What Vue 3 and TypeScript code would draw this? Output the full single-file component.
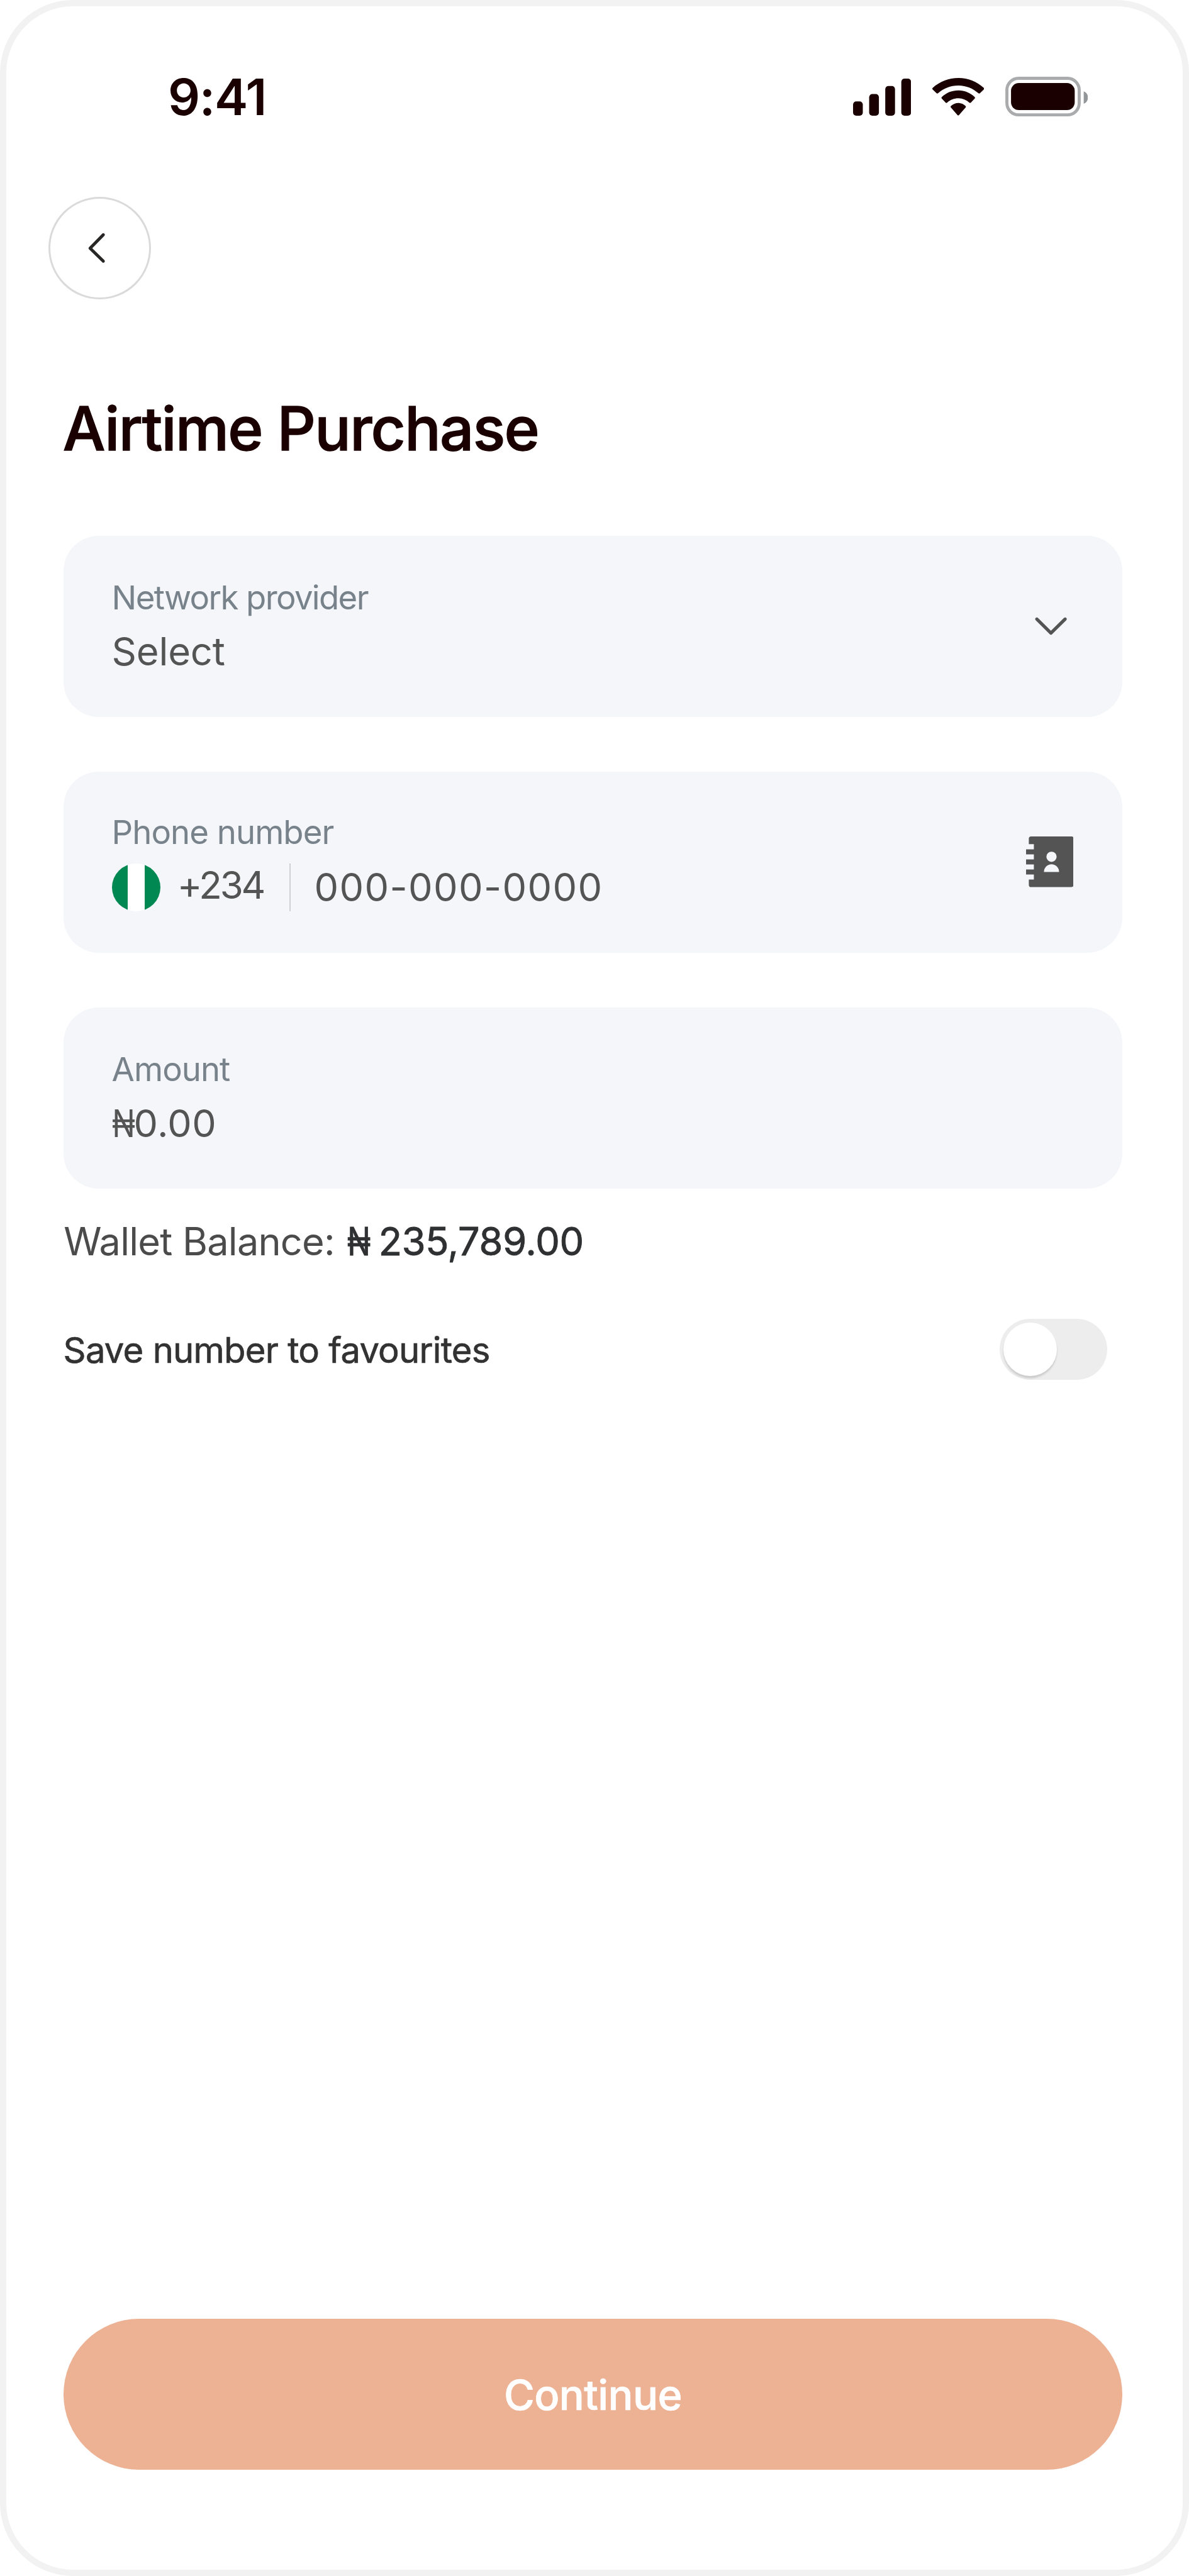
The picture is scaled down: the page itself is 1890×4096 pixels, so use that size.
<script setup lang="ts">
import { ref } from 'vue'

const provider = ref('Select')
const favourite = ref(false)
</script>

<template>
  <main class="screen">
    <header class="status">
      <span class="time">9:41</span>
      <div class="indicators">
        <svg class="signal" viewBox="0 0 109.5 70" aria-hidden="true">
          <rect x="0" y="43" width="18.4" height="27" rx="6" />
          <rect x="30.4" y="29" width="18.4" height="41" rx="6" />
          <rect x="60.8" y="14" width="18.4" height="56" rx="6" />
          <rect x="91.1" y="0" width="18.4" height="70" rx="6" />
        </svg>
        <svg class="wifi" viewBox="0 0 17.142 12.33" preserveAspectRatio="none" aria-hidden="true">
          <path d="M8.5713 2.46628C11.0584 2.46639 13.4504 3.38847 15.2529 5.04195C15.3887 5.16963 15.6056 5.16802 15.7393 5.03834L17.0368 3.77487C17.1045 3.70911 17.1422 3.62004 17.1417 3.52735C17.1411 3.43467 17.1023 3.34603 17.0338 3.28104C12.3028 -1.09368 4.83907 -1.09368 0.108056 3.28104C0.03995 3.34598 0.00064 3.4346 0 3.52728C-0.00062 3.61996 0.03705 3.70906 0.10469 3.77487L1.40255 5.03834C1.53615 5.16822 1.75327 5.16983 1.88893 5.04195C3.69167 3.38836 6.08395 2.46628 8.5713 2.46628Z" />
          <path d="M8.56795 6.68656C9.92527 6.68647 11.2341 7.19821 12.2403 8.12234C12.3763 8.25347 12.5907 8.25063 12.7234 8.11594L14.0106 6.79647C14.0784 6.72724 14.116 6.63331 14.115 6.53577C14.114 6.43824 14.0746 6.34521 14.0054 6.27747C10.9416 3.38672 6.19688 3.38672 3.13305 6.27747C3.06384 6.34521 3.02435 6.43829 3.02345 6.53585C3.02254 6.6334 3.06028 6.72722 3.12822 6.79647L4.41513 8.11594C4.54778 8.25063 4.76215 8.25347 4.89823 8.12234C5.90368 7.19882 7.21151 6.68713 8.56795 6.68656Z" />
          <path d="M11.0924 9.48011C11.0943 9.58546 11.0572 9.68703 10.9899 9.76084L8.81327 12.2156C8.74946 12.2877 8.66247 12.3283 8.5717 12.3283C8.48093 12.3283 8.39394 12.2877 8.33014 12.2156L6.15311 9.76084C6.08581 9.68697 6.04892 9.58538 6.05106 9.48003C6.0532 9.37468 6.09422 9.27497 6.16438 9.20444C7.55436 7.89056 9.58905 7.89056 10.979 9.20444C11.0492 9.27502 11.0902 9.37476 11.0924 9.48011Z" />
        </svg>
        <svg class="battery" viewBox="0 0 156 75" aria-hidden="true">
          <rect x="3" y="3" width="136.5" height="69" rx="22" fill="none" stroke="#a9abad" stroke-width="5.8" />
          <rect x="10.8" y="12" width="120.2" height="51" rx="14.5" />
          <path d="M148 27.5a12.6 12.6 0 0 1 0 23.4z" fill="#939699" />
        </svg>
      </div>
    </header>

    <button class="back" type="button" aria-label="Back">
      <svg viewBox="0 0 34 60" aria-hidden="true">
        <path d="M30 5L5 30.5L30 55" />
      </svg>
    </button>

    <section class="content">
      <h1 class="title">Airtime Purchase</h1>

      <div class="fields">
        <div class="card">
          <div class="field">
            <span class="label network">Network provider</span>
            <span class="value">{{ provider }}</span>
          </div>
          <svg class="chevron" viewBox="0 0 66 44" aria-hidden="true">
            <path d="M6 8.8L32.7 35.2L59.5 8.8" />
          </svg>
        </div>

        <div class="card phone">
          <div class="field">
            <span class="label">Phone number</span>
            <div class="phone-row">
              <span class="flag" />
              <span class="code">+234</span>
              <span class="divider" />
              <span class="number">000-000-0000</span>
            </div>
          </div>
          <svg class="contacts" viewBox="0 0 18.9 20.1" aria-hidden="true">
            <path fill-rule="evenodd" d="M2 0H18A.9.9 0 0 1 18.9.9V19.2A.9.9 0 0 1 18 20.1H2A.9.9 0 0 1 1.1 19.2V17.1H3.1V15.1H0V13.1H3.1V11.1H0V9.1H3.1V7.1H0V5.1H3.1V3.05H1.1V.9A.9.9 0 0 1 2 0ZM7.1 14.1H13.1A3 3.05 0 0 0 7.1 14.1ZM10.1 10.1A2.03 2.03 0 1 0 10.1 6.04A2.03 2.03 0 0 0 10.1 10.1Z" />
          </svg>
        </div>

        <div class="card">
          <div class="field">
            <span class="label">Amount</span>
            <span class="value amount"><span class="naira">₦</span>0.00</span>
          </div>
        </div>
      </div>

      <p class="wallet"><span class="wallet-label">Wallet Balance:</span><span class="balance"><span class="naira">₦ </span>235,789.00</span></p>

      <div class="save">
        <span class="save-label">Save number to favourites</span>
        <button class="toggle" :class="{ on: favourite }" type="button" role="switch" :aria-checked="favourite" aria-label="Save number to favourites" @click="favourite = !favourite">
          <span class="knob" />
        </button>
      </div>

      <button class="continue" type="button">Continue</button>
    </section>
  </main>
</template>

<style>
body {
  background: #fff;
}
</style>

<style scoped>
.screen {
  box-sizing: border-box;
  width: 1890px;
  height: 4096px;
  padding-top: 104px;
  border: 10px solid #f2f2f2;
  border-radius: 116px;
  background: #fff;
  color: #1a0000;
  font-family: Inter, "Liberation Sans", sans-serif;
  display: flex;
  flex-direction: column;
  overflow: hidden;
}

button {
  font: inherit;
  border: 0;
  padding: 0;
  margin: 0;
}

.status {
  display: flex;
  align-items: center;
  justify-content: space-between;
  height: 80px;
  padding: 0 151px 0 257px;
}

.time {
  font-size: 80px;
  line-height: 80px;
  font-weight: 600;
  letter-spacing: -1.3px;
}

.indicators {
  display: flex;
  align-items: center;
  fill: #1a0000;
}

.signal {
  width: 92.2px;
  height: 59px;
}

.wifi {
  width: 82.4px;
  height: 59.5px;
  margin-left: 33.4px;
}

.battery {
  width: 131.4px;
  height: 63.2px;
  margin-left: 33.6px;
}

.back {
  box-sizing: border-box;
  width: 163px;
  height: 163px;
  margin: 118.5px 0 0 67.2px;
  border: 3px solid #dadada;
  border-radius: 50%;
  background: #fff;
  display: flex;
  align-items: center;
  justify-content: center;
  flex: none;
}

.back svg {
  width: 28.6px;
  height: 50.5px;
  margin-right: 10.2px;
}

.back path {
  fill: none;
  stroke: #292626;
  stroke-width: 5.8;
  stroke-linecap: round;
  stroke-linejoin: round;
}

.content {
  flex: 1;
  display: flex;
  flex-direction: column;
  padding: 145.5px 96.2px 159px 91.2px;
}

.title {
  margin: 0 0 111px -1.4px;
  font-size: 95.7px;
  line-height: 120px;
  font-weight: 500;
  letter-spacing: -1.7px;
  -webkit-text-stroke: 1.3px currentColor;
}

.fields {
  display: flex;
  flex-direction: column;
  gap: 86.8px;
}

.card {
  box-sizing: border-box;
  height: 288px;
  padding: 66.2px 85.5px 0 76.4px;
  border-radius: 56px;
  background: #f4f6fa;
  display: flex;
  justify-content: space-between;
}

.card.phone {
  padding-top: 64.4px;
  padding-right: 77.5px;
}

.field {
  display: flex;
  flex-direction: column;
}

.label {
  font-size: 52.7px;
  line-height: 64px;
  letter-spacing: -0.97px;
  color: #78828a;
}

.label.network {
  letter-spacing: -1.64px;
}

.value {
  margin-top: 15.8px;
  font-size: 61.5px;
  line-height: 76px;
  letter-spacing: -0.2px;
  color: #545454;
}

.naira {
  display: inline-block;
  transform: scaleX(0.79);
  transform-origin: left;
}

.value.amount {
  font-size: 61px;
  letter-spacing: 0.4px;
}

.amount .naira {
  width: 35px;
}

.chevron {
  width: 55.6px;
  height: 37px;
  margin-top: 58.5px;
}

.chevron path {
  fill: none;
  stroke: #545454;
  stroke-width: 6.2;
  stroke-linecap: round;
  stroke-linejoin: round;
}

.phone-row {
  display: flex;
  align-items: center;
  height: 76.7px;
  margin-top: 17.6px;
  color: #545454;
}

.flag {
  width: 76.7px;
  height: 76.7px;
  margin-left: 0.5px;
  border-radius: 50%;
  background: linear-gradient(90deg, #008853 33%, #fff 33%, #fff 67%, #008853 67%);
}

.code {
  width: 178.2px;
  margin: 0 0 8.6px 27px;
  font-size: 60px;
  line-height: 68px;
  letter-spacing: -3.2px;
}

.divider {
  width: 2.5px;
  height: 76.7px;
  background: #cfd1d0;
}

.number {
  margin-left: 37px;
  font-size: 61.2px;
  line-height: 76px;
  letter-spacing: 1.4px;
}

.contacts {
  width: 75.7px;
  height: 80.5px;
  margin-top: 39px;
  fill: #545454;
}

.wallet {
  display: flex;
  margin: 46.8px 0 0;
  font-size: 61.2px;
  line-height: 76px;
}

.wallet-label {
  width: 451px;
  letter-spacing: -0.76px;
  color: #4b4b4b;
}

.balance {
  letter-spacing: -0.25px;
  color: #2f3031;
  -webkit-text-stroke: 0.9px currentColor;
}

.balance .naira {
  width: 49.5px;
}

.save {
  display: flex;
  align-items: center;
  justify-content: space-between;
  margin: 84.3px 24px 0 -0.6px;
}

.save-label {
  padding-top: 2px;
  font-size: 56.2px;
  line-height: 70px;
  letter-spacing: -0.75px;
  color: #323232;
  -webkit-text-stroke: 0.7px currentColor;
}

.toggle {
  box-sizing: border-box;
  width: 171px;
  height: 97.8px;
  padding: 6.1px;
  border-radius: 49px;
  background: #ededed;
  overflow: hidden;
}

.knob {
  display: block;
  width: 85.5px;
  height: 85.5px;
  border-radius: 50%;
  background: #fff;
  box-shadow: 0 3.5px 3px rgba(0, 0, 0, 0.14);
}

.toggle.on .knob {
  margin-left: auto;
}

.continue {
  height: 240.3px;
  margin-top: auto;
  padding-top: 2px;
  border-radius: 121px;
  background: #edb194;
  color: #fff;
  font-size: 66.6px;
  font-weight: 500;
  letter-spacing: -0.6px;
  -webkit-text-stroke: 0.7px currentColor;
}
</style>
